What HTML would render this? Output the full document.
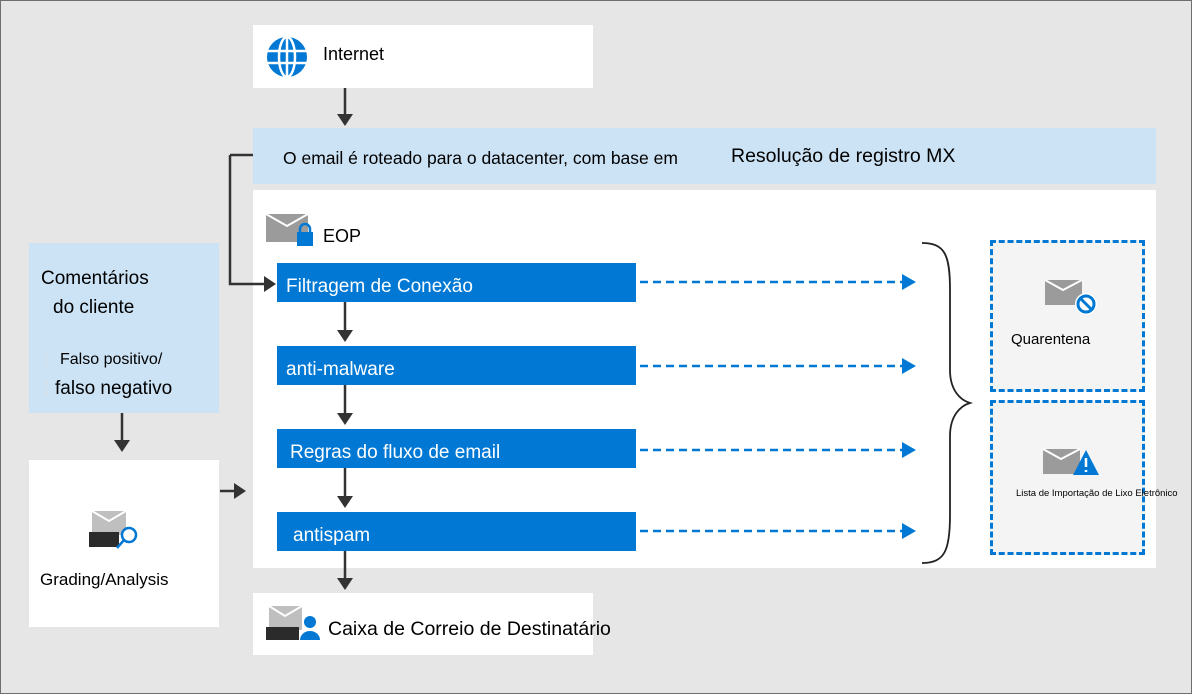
<!DOCTYPE html>
<html><head><meta charset="utf-8"><style>
*{margin:0;padding:0;box-sizing:border-box}
body{width:1192px;height:694px;background:#e6e6e6;position:relative;overflow:hidden;font-family:"Liberation Sans",Arial,sans-serif;color:#000}
.frame{position:absolute;left:0;top:0;width:1192px;height:694px;border:1px solid #6e6e6e}
.a{position:absolute}
.w{background:#fff}
.lb{background:#cce3f5}
.bar{position:absolute;left:277px;width:359px;height:39px;background:#0078d4;color:#fff;font-size:19px;line-height:47px;padding-left:9px}
.t{position:absolute;white-space:nowrap}
.dash{position:absolute;left:990px;width:155px;border:3px dashed #0078d4;background:#f4f4f4}
</style></head><body>
<div class="frame"></div>
<div class="a w" style="left:253px;top:25px;width:340px;height:63px"></div>
<div class="a lb" style="left:253px;top:128px;width:903px;height:56px"></div>
<div class="a w" style="left:253px;top:190px;width:903px;height:378px"></div>
<div class="a lb" style="left:29px;top:243px;width:190px;height:170px"></div>
<div class="a w" style="left:29px;top:460px;width:190px;height:167px"></div>
<div class="a w" style="left:253px;top:593px;width:340px;height:62px"></div>
<div class="dash" style="top:240px;height:152px"></div>
<div class="dash" style="top:400px;height:155px"></div>

<div class="t" style="left:323px;top:44px;font-size:18px">Internet</div>
<div class="t" style="left:283px;top:148px;font-size:17.5px">O email é roteado para o datacenter, com base em</div>
<div class="t" style="left:731px;top:145px;font-size:19.5px">Resolução de registro MX</div>
<div class="t" style="left:323px;top:226px;font-size:18px">EOP</div>
<div class="bar" style="top:263px">Filtragem de Conexão</div>
<div class="bar" style="top:346px">anti-malware</div>
<div class="bar" style="top:429px;padding-left:13px">Regras do fluxo de email</div>
<div class="bar" style="top:512px;padding-left:16px">antispam</div>
<div class="t" style="left:41px;top:268px;font-size:19px">Comentários</div>
<div class="t" style="left:53px;top:297px;font-size:19px">do cliente</div>
<div class="t" style="left:60px;top:351px;font-size:16px">Falso positivo/</div>
<div class="t" style="left:55px;top:378px;font-size:19px">falso negativo</div>
<div class="t" style="left:40px;top:570px;font-size:17px">Grading/Analysis</div>
<div class="t" style="left:328px;top:618px;font-size:19.5px">Caixa de Correio de Destinatário</div>
<div class="t" style="left:1011px;top:331px;font-size:15px">Quarentena</div>
<div class="t" style="left:1016px;top:488px;font-size:9.5px">Lista de Importação de Lixo Eletrônico</div>

<svg class="a" style="left:0;top:0" width="1192" height="694">
<g stroke="#333" stroke-width="2.5" fill="none">
<path d="M345 88V116M345 302V332M345 385V415M345 468V498M345 551V580M230 155H253M230 155V284H266M122 413V442M220 491H236"/>
</g>
<g fill="#333">
<path d="M337 114h16l-8 12z"/><path d="M337 330h16l-8 12z"/><path d="M337 413h16l-8 12z"/><path d="M337 496h16l-8 12z"/><path d="M337 578h16l-8 12z"/>
<path d="M264 276v16l12-8z"/><path d="M114 440h16l-8 12z"/><path d="M234 483v16l12-8z"/>
</g>
<g stroke="#0078d4" stroke-width="2.5" stroke-dasharray="8 5">
<path d="M640 282H902M640 366H902M640 450H902M640 531H902"/>
</g>
<g fill="#0078d4">
<path d="M902 274v16l14-8z"/><path d="M902 358v16l14-8z"/><path d="M902 442v16l14-8z"/><path d="M902 523v16l14-8z"/>
</g>
<path d="M922 243C945 243 950 255 950 290V370C950 390 960 400 970 403C960 406 950 416 950 436V515C950 550 945 563 922 563" stroke="#222" stroke-width="1.8" fill="none"/>
<g transform="translate(287,57)"><circle r="20" fill="#0078d4"/>
<g stroke="#fff" stroke-width="2.5" fill="none"><ellipse rx="8" ry="20"/><path d="M0-20V20M-20-6H20M-20 6H20"/></g></g>
<g><path d="M266 214h42v28h-42z" fill="#9b9b9b"/><path d="M266 214l21 12 21-12" stroke="#fff" stroke-width="2" fill="none"/>
<rect x="297" y="232" width="16" height="14" fill="#0078d4"/><path d="M300 233v-4a5 5 0 0110 0v4" stroke="#0078d4" stroke-width="2.5" fill="none"/></g>
<g><path d="M1045 280h37v25h-37z" fill="#9b9b9b"/><path d="M1045 280l18 10 19-10" stroke="#fff" stroke-width="2" fill="none"/>
<circle cx="1086" cy="304" r="11" fill="#fff"/><circle cx="1086" cy="304" r="8" stroke="#0078d4" stroke-width="3" fill="none"/><path d="M1081 299l10 10" stroke="#0078d4" stroke-width="3"/></g>
<g><path d="M1043 449h37v25h-37z" fill="#9b9b9b"/><path d="M1043 449l18 10 19-10" stroke="#fff" stroke-width="2" fill="none"/>
<path d="M1086 450l13 25h-26z" fill="#0078d4"/><path d="M1086 458v9M1086 470v2" stroke="#fff" stroke-width="2.5"/></g>
<g><path d="M92 511h34v24h-34z" fill="#bfbfbf"/><path d="M92 511l17 10 17-10" stroke="#fff" stroke-width="2" fill="none"/>
<rect x="89" y="532" width="30" height="15" fill="#2b2b2b"/>
<circle cx="129" cy="535" r="7" fill="#fff" stroke="#0078d4" stroke-width="2.5"/><path d="M124 540l-7 8" stroke="#0078d4" stroke-width="2.5"/></g>
<g><path d="M269 606h33v24h-33z" fill="#bfbfbf"/><path d="M269 606l16 10 17-10" stroke="#fff" stroke-width="2" fill="none"/>
<rect x="266" y="627" width="33" height="13" fill="#2b2b2b"/>
<circle cx="310" cy="622" r="6" fill="#0078d4"/><path d="M300 640a10 9 0 0120 0z" fill="#0078d4"/></g>
<path d="M46 352v16M46 380v16" stroke="#ddd" stroke-width="1"/>
</svg>
</body></html>
